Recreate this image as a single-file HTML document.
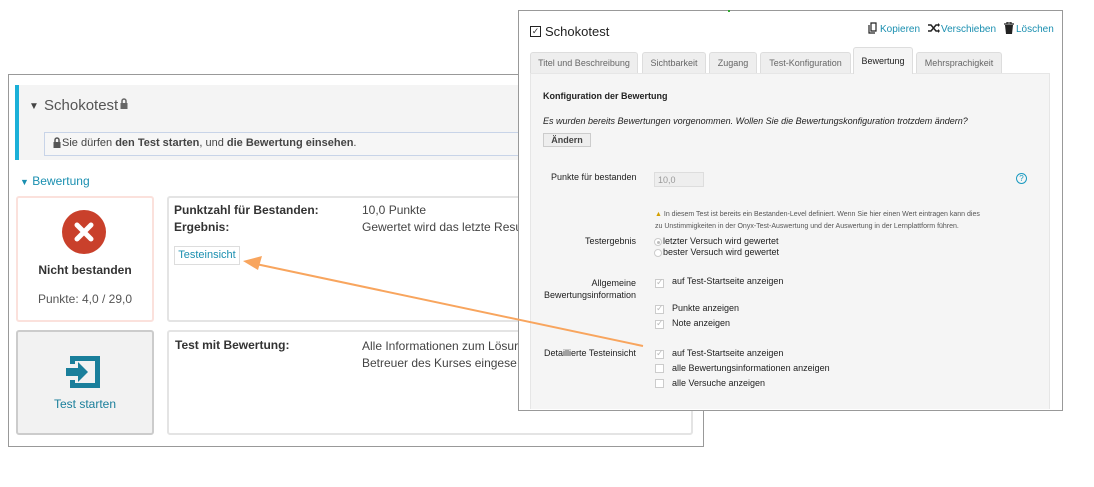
<!DOCTYPE html>
<html><head><meta charset="utf-8"><style>
*{box-sizing:border-box;margin:0;padding:0}
body{width:1094px;height:487px;background:#fff;font-family:"Liberation Sans",sans-serif;position:relative;overflow:hidden;color:#333}
.a{position:absolute}
.t{font-size:12px;white-space:nowrap}
.s{font-size:9px;white-space:nowrap;color:#222}
.cb{position:absolute;width:9px;height:9px;border:1px solid #ccc;background:#fff}
.cb.c::after{content:"✓";position:absolute;left:0;top:-3px;font-size:9px;color:#bbb}
.tab{position:absolute;top:52px;height:21px;border:1px solid #ddd;border-bottom:none;background:#eee;border-radius:3px 3px 0 0;font-size:9px;color:#666;text-align:center;line-height:20px}
</style></head><body>
<div class="a" style="left:8px;top:74px;width:696px;height:373px;border:1px solid #999;background:#fff"></div>
<div class="a" style="left:15px;top:85px;width:690px;height:75px;background:#f4f4f4"></div>
<div class="a" style="left:15px;top:85px;width:4px;height:75px;background:#1ab0d8"></div>
<div class="a" style="left:29px;top:101px;font-size:10px;color:#444">▼</div>
<div class="a" style="left:44px;top:97px;font-size:15px;color:#555">Schokotest</div>
<svg class="a" style="left:120px;top:98px" width="8" height="11" viewBox="0 0 8 11"><path d="M2 5V3a2 2 0 0 1 4 0v2" fill="none" stroke="#666" stroke-width="1.5"/><rect x="0.5" y="5" width="7" height="6" fill="#666"/></svg>
<div class="a" style="left:44px;top:132px;width:660px;height:24px;border:1px solid #c8d4e8;background:#f6f6f6"></div>
<svg class="a" style="left:53px;top:137px" width="8" height="11" viewBox="0 0 8 11"><path d="M2 5V3a2 2 0 0 1 4 0v2" fill="none" stroke="#555" stroke-width="1.5"/><rect x="0.5" y="5" width="7" height="6" fill="#555"/></svg>
<div class="a t" style="left:62px;top:137px;font-size:11px;color:#444">Sie dürfen <b>den Test starten</b>, und <b>die Bewertung einsehen</b>.</div>
<div class="a t" style="left:20px;top:174px;color:#1a8fb0"><span style="font-size:9px">▼</span> Bewertung</div>
<div class="a" style="left:16px;top:196px;width:138px;height:126px;border:2px solid #fbe1dc;border-radius:3px;background:#fff"></div>
<svg class="a" style="left:62px;top:210px" width="44" height="44" viewBox="0 0 44 44"><circle cx="22" cy="22" r="22" fill="#c9402b"/><path d="M15 15L29 29M29 15L15 29" stroke="#fff" stroke-width="5" stroke-linecap="round"/></svg>
<div class="a t" style="left:16px;top:263px;width:138px;text-align:center;font-weight:bold;color:#333">Nicht bestanden</div>
<div class="a t" style="left:16px;top:292px;width:138px;text-align:center;color:#555">Punkte: 4,0 / 29,0</div>
<div class="a" style="left:167px;top:196px;width:526px;height:126px;border:2px solid #e4e4e4;border-radius:3px"></div>
<div class="a t" style="left:174px;top:203px;font-weight:bold">Punktzahl für Bestanden:</div>
<div class="a t" style="left:174px;top:220px;font-weight:bold">Ergebnis:</div>
<div class="a t" style="left:362px;top:203px;color:#444">10,0 Punkte</div>
<div class="a t" style="left:362px;top:220px;color:#444">Gewertet wird das letzte Resu</div>
<div class="a" style="left:174px;top:246px;width:66px;height:19px;border:1px solid #ddd;font-size:11px;color:#1a8fb0;text-align:center;line-height:17px">Testeinsicht</div>
<div class="a" style="left:16px;top:330px;width:138px;height:105px;border:2px solid #ccc;border-radius:3px;background:#f2f2f2"></div>
<svg class="a" style="left:64px;top:352px" width="40" height="40" viewBox="0 0 40 40"><path d="M6 4h30v32H6v-8h5v3h20V9H11v3H6z" fill="#1a7f9b"/><path d="M2 16h12v-6l10 10-10 10v-6H2z" fill="#1a7f9b"/></svg>
<div class="a t" style="left:16px;top:397px;width:138px;text-align:center;color:#1a7f9b">Test starten</div>
<div class="a" style="left:167px;top:330px;width:526px;height:105px;border:2px solid #e4e4e4;border-radius:3px"></div>
<div class="a t" style="left:175px;top:338px;font-weight:bold">Test mit Bewertung:</div>
<div class="a t" style="left:362px;top:338px;color:#444;line-height:17px">Alle Informationen zum Lösur<br>Betreuer des Kurses eingese</div>
<div class="a" style="left:518px;top:10px;width:545px;height:401px;border:1px solid #999;background:#fff"></div>
<div class="a" style="left:728px;top:10px;width:2px;height:2px;background:#3a3"></div>
<div class="a" style="left:530px;top:26px;width:11px;height:11px;border:1.5px solid #222;font-size:9px;line-height:9px;text-align:center">✓</div>
<div class="a" style="left:545px;top:24px;font-size:13px;color:#222">Schokotest</div>
<svg class="a" style="left:868px;top:22px" width="11" height="12" viewBox="0 0 11 12"><path d="M3 1h5v8H3z M1 3v8h6" fill="none" stroke="#222" stroke-width="1.2"/></svg>
<div class="a s" style="left:880px;top:24px;color:#1a8fb0;font-size:10px">Kopieren</div>
<svg class="a" style="left:928px;top:23px" width="12" height="10" viewBox="0 0 12 10"><path d="M0 2h3l5 6h3M0 8h3l5-6h3" fill="none" stroke="#222" stroke-width="1.5"/><path d="M10 0l2 2-2 2zM10 6l2 2-2 2z" fill="#222"/></svg>
<div class="a s" style="left:941px;top:24px;color:#1a8fb0;font-size:10px">Verschieben</div>
<svg class="a" style="left:1004px;top:22px" width="10" height="12" viewBox="0 0 10 12"><path d="M0 2h10M3 2V0h4v2" stroke="#222" fill="none" stroke-width="1.2"/><path d="M1 3h8l-1 9H2z" fill="#222"/></svg>
<div class="a s" style="left:1016px;top:24px;color:#1a8fb0;font-size:10px">Löschen</div>
<div class="a" style="left:530px;top:73px;width:520px;height:336px;background:#f5f5f5;border:1px solid #e6e6e6;border-bottom:none"></div>
<div class="tab" style="left:530px;width:108px">Titel und Beschreibung</div>
<div class="tab" style="left:642px;width:64px">Sichtbarkeit</div>
<div class="tab" style="left:709px;width:48px">Zugang</div>
<div class="tab" style="left:760px;width:91px">Test-Konfiguration</div>
<div class="tab" style="left:853px;top:47px;height:27px;width:60px;background:#f5f5f5;color:#222;line-height:26px">Bewertung</div>
<div class="tab" style="left:916px;width:86px">Mehrsprachigkeit</div>
<div class="a s" style="left:543px;top:91px;font-weight:bold">Konfiguration der Bewertung</div>
<div class="a s" style="left:543px;top:116px;font-style:italic">Es wurden bereits Bewertungen vorgenommen. Wollen Sie die Bewertungskonfiguration trotzdem ändern?</div>
<div class="a s" style="left:543px;top:133px;width:48px;height:14px;border:1px solid #ccc;background:#eee;font-weight:bold;text-align:center;line-height:12px;color:#444">Ändern</div>
<div class="a s" style="left:551px;top:172px">Punkte für bestanden</div>
<div class="a s" style="left:654px;top:172px;width:50px;height:15px;border:1px solid #ddd;background:#eee;color:#999;padding:2px 3px">10,0</div>
<div class="a" style="left:1016px;top:173px;width:11px;height:11px;border:1.5px solid #1a9ac0;border-radius:50%;font-size:8px;color:#1a9ac0;text-align:center;line-height:9px">?</div>
<div class="a" style="left:655px;top:209px;font-size:7px;color:#555;line-height:12px;white-space:nowrap"><span style="color:#d4a000">▲</span> In diesem Test ist bereits ein Bestanden-Level definiert. Wenn Sie hier einen Wert eintragen kann dies<br>zu Unstimmigkeiten in der Onyx-Test-Auswertung und der Auswertung in der Lernplattform führen.</div>
<div class="a s" style="left:585px;top:236px">Testergebnis</div>
<div class="a" style="left:654px;top:238px;width:8px;height:8px;border:1px solid #ccc;border-radius:50%;background:#fff"><div style="margin:1.5px;width:3px;height:3px;border-radius:50%;background:#bbb"></div></div>
<div class="a s" style="left:663px;top:236px">letzter Versuch wird gewertet</div>
<div class="a" style="left:654px;top:249px;width:8px;height:8px;border:1px solid #ccc;border-radius:50%;background:#fff"></div>
<div class="a s" style="left:663px;top:247px">bester Versuch wird gewertet</div>
<div class="a s" style="left:544px;top:277px;text-align:right;width:92px;line-height:12px">Allgemeine<br>Bewertungsinformation</div>
<div class="cb c" style="left:655px;top:279px"></div><div class="a s" style="left:672px;top:276px">auf Test-Startseite anzeigen</div>
<div class="cb c" style="left:655px;top:305px"></div><div class="a s" style="left:672px;top:303px">Punkte anzeigen</div>
<div class="cb c" style="left:655px;top:320px"></div><div class="a s" style="left:672px;top:318px">Note anzeigen</div>
<div class="a s" style="left:544px;top:348px">Detaillierte Testeinsicht</div>
<div class="cb c" style="left:655px;top:350px"></div><div class="a s" style="left:672px;top:348px">auf Test-Startseite anzeigen</div>
<div class="cb" style="left:655px;top:364px"></div><div class="a s" style="left:672px;top:363px">alle Bewertungsinformationen anzeigen</div>
<div class="cb" style="left:655px;top:379px"></div><div class="a s" style="left:672px;top:378px">alle Versuche anzeigen</div>
<svg class="a" style="left:0;top:0" width="1094" height="487"><line x1="643" y1="346" x2="256" y2="264" stroke="#f8a55e" stroke-width="2"/><path d="M243 261 L262 256 L258 270 Z" fill="#f8a55e"/></svg>
</body></html>
